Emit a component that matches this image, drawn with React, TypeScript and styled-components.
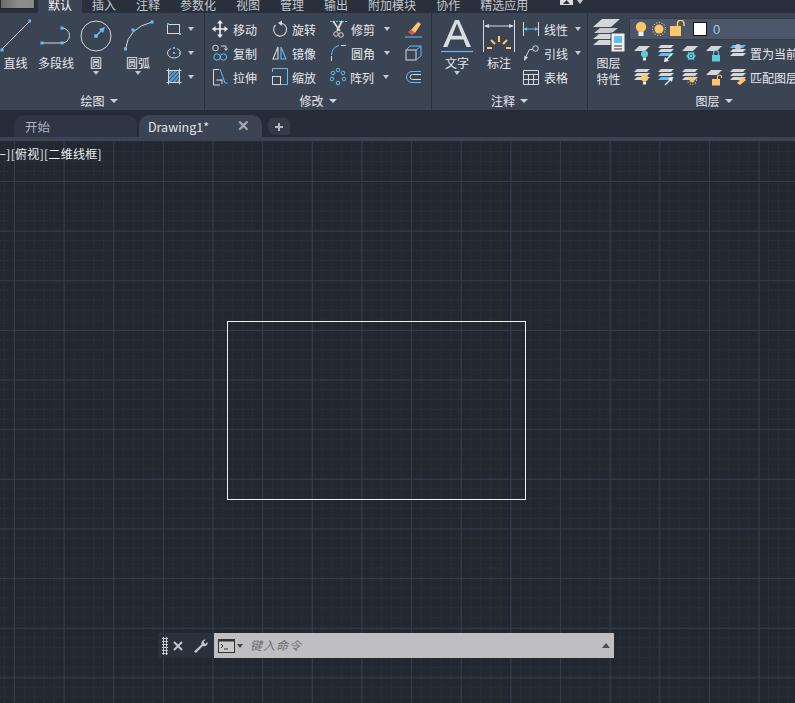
import React from "react";
import styled, { createGlobalStyle } from "styled-components";

const BLUE = "#62bdf5";
const GREY = "#d6d8dc";
const AMBER = "#fbc76a";
const TEAL = "#5ccdd6";

const GlobalStyle = createGlobalStyle`
  html, body {
    margin: 0;
    height: 100%;
    overflow: hidden;
    background: #212830;
  }
  body {
    font-family: "Noto Sans CJK SC", "Liberation Sans", sans-serif;
    font-size: 12px;
    color: #e6e8ec;
  }
  svg {
    display: block;
    flex: none;
  }
`;

const Page = styled.div`
  width: 795px;
  height: 703px;
  display: flex;
  flex-direction: column;
  overflow: hidden;
`;

const MenuBar = styled.div`
  height: 13px;
  flex: none;
  display: flex;
  background: #29303c;
  overflow: hidden;
`;

const QuickAccess = styled.div`
  width: 33px;
  height: 8px;
  margin-right: 3px;
  border: 1px solid #23282f;
  border-top: 0;
  background: linear-gradient(to right, #6a6a6a, #8d8d8d 55%, #8a8a8a);
`;

const MenuTab = styled.div<{ $active?: boolean }>`
  height: 13px;
  padding: 0 10px;
  line-height: 9px;
  color: ${(p) => (p.$active ? "#f2f3f5" : "#c3c7ce")};
  background: ${(p) => (p.$active ? "#3b4453" : "transparent")};
`;

const MenuToggle = styled.div`
  display: flex;
  align-items: flex-start;
  gap: 4px;
  margin-left: 22px;
`;

const Ribbon = styled.div`
  height: 97px;
  flex: none;
  display: flex;
  background: #3b4453;
  overflow: hidden;
`;

const Panel = styled.section<{ $width: number; $offset?: number; $last?: boolean }>`
  width: ${(p) => p.$width}px;
  flex: none;
  margin-left: ${(p) => p.$offset ?? 0}px;
  display: flex;
  flex-direction: column;
  border-right: ${(p) => (p.$last ? "0" : "1px solid #29303c")};
  box-sizing: border-box;
`;

const PanelBody = styled.div<{ $inset?: number }>`
  height: 79px;
  flex: none;
  display: flex;
  padding: 4px 0 0 ${(p) => p.$inset ?? 0}px;
  box-sizing: border-box;
`;

const PanelTitle = styled.div`
  height: 18px;
  display: flex;
  align-items: center;
  justify-content: center;
  gap: 5px;
  line-height: 18px;
`;

const BigTool = styled.div<{ $width: number }>`
  width: ${(p) => p.$width}px;
  flex: none;
  display: flex;
  flex-direction: column;
  align-items: center;
`;

const BigIcon = styled.div`
  height: 38px;
  display: flex;
  align-items: center;
  justify-content: center;
`;

const BigLabel = styled.div`
  line-height: 16px;
  white-space: nowrap;
  text-align: center;
`;

const ToolColumn = styled.div<{ $width?: number; $inset?: number }>`
  width: ${(p) => (p.$width ? `${p.$width}px` : "auto")};
  flex: none;
  padding-left: ${(p) => p.$inset ?? 0}px;
  box-sizing: border-box;
`;

const SmallTool = styled.div<{ $gap?: number }>`
  height: 24px;
  display: flex;
  align-items: center;
  gap: ${(p) => p.$gap ?? 5}px;
  white-space: nowrap;
`;

const SmallCaret = styled.span<{ $gap?: number; $color?: string }>`
  margin-left: ${(p) => p.$gap ?? 1}px;
  width: 0;
  height: 0;
  border: 3px solid transparent;
  border-top: 4px solid ${(p) => p.$color ?? "#c5c8ce"};
  border-bottom: 0;
`;

const TitleCaret = styled.span`
  width: 0;
  height: 0;
  border: 4px solid transparent;
  border-top: 4px solid #cfd2d7;
  border-bottom: 0;
`;

const LayerSide = styled.div`
  flex: 1;
  margin-top: 1px;
`;

const LayerSelect = styled.div`
  height: 22px;
  margin-bottom: 1px;
  padding-left: 4px;
  display: flex;
  align-items: center;
  gap: 4px;
  background: #4b5668;
  border: 1px solid #343c4a;
  border-right: 0;
  color: #9ccbee;
  font-family: "Liberation Sans", sans-serif;
  font-size: 13px;
  box-sizing: border-box;
`;

const Swatch = styled.span`
  width: 12px;
  height: 12px;
  margin: 0 2px 0 3px;
  background: #fff;
  border: 1px solid #111;
`;

const LayerRow = styled.div`
  height: 24px;
  padding-left: 4px;
  display: flex;
  align-items: center;
  gap: 7px;
  white-space: nowrap;
`;

const LayerLabel = styled.span`
  margin-left: -3px;
`;

const FileTabs = styled.div`
  height: 27px;
  flex: none;
  display: flex;
  align-items: flex-end;
  padding-left: 14px;
  gap: 2px;
  background: #252c37;
`;

const FileTab = styled.div<{ $active?: boolean }>`
  width: 123px;
  height: 22px;
  padding: 0 11px 0 ${(p) => (p.$active ? 9 : 11)}px;
  display: flex;
  align-items: center;
  justify-content: space-between;
  box-sizing: border-box;
  border-radius: 10px 10px 0 0;
  font-size: 12.5px;
  color: ${(p) => (p.$active ? "#e3e5e9" : "#aeb4bd")};
  background: ${(p) => (p.$active ? "#3b4453" : "#2e3644")};
`;

const TabClose = styled.span`
  color: #a7abb2;
  font-size: 15px;
  font-family: "Liberation Sans", sans-serif;
  font-weight: 700;
  margin-right: 1px;
`;

const NewTab = styled.div`
  width: 22px;
  height: 17px;
  margin-left: 4px;
  margin-bottom: 2px;
  display: flex;
  align-items: center;
  justify-content: center;
  border-radius: 6px 6px 2px 8px;
  background: #333b49;
`;

const TabRule = styled.div`
  height: 4px;
  flex: none;
  background: #3b4453;
`;

const Canvas = styled.main`
  position: relative;
  flex: 1;
  overflow: hidden;
  background-color: #212830;
  background-image:
    linear-gradient(to right, #363c50 1px, transparent 1px),
    linear-gradient(to bottom, #363c50 1px, transparent 1px),
    conic-gradient(from 270deg at 1px 2px, #2b313e 90deg, transparent 0),
    conic-gradient(from 270deg at 2px 1px, #2b313e 90deg, transparent 0);
  background-size: 49.65px 100%, 100% 49.65px, 9.93px 3.31px, 3.31px 9.93px;
  background-position: 14px 0, 0 40px, 4px 0, 0 0;
`;

const ViewLabel = styled.div`
  position: absolute;
  left: -5px;
  top: 5px;
  line-height: 16px;
  letter-spacing: 0.3px;
  color: #eceef0;
  white-space: nowrap;
`;

const Rectangle = styled.div`
  position: absolute;
  left: 227px;
  top: 180px;
  width: 297px;
  height: 177px;
  border: 1px solid #f2f2f2;
`;

const CommandLine = styled.div`
  position: absolute;
  left: 158px;
  top: 492px;
  width: 456px;
  height: 25px;
  display: flex;
  align-items: center;
  background: #2a313d;
`;

const Gripper = styled.div`
  width: 6px;
  height: 18px;
  margin: 0 4px;
  background-image: radial-gradient(circle, #c4c7cc 1.1px, transparent 1.4px);
  background-size: 3px 3px;
`;

const ToolGap = styled.span`
  width: 9px;
  flex: none;
`;

const CommandInput = styled.div`
  flex: 1;
  height: 25px;
  margin-left: 5px;
  padding: 0 4px;
  display: flex;
  align-items: center;
  background: #bfbfc1;
  color: #6c6c6e;
  font-style: italic;
`;

const Placeholder = styled.span`
  flex: 1;
  margin-left: 7px;
  padding-bottom: 2px;
  letter-spacing: 1px;
`;

const Node = ({ x, y, s = 4 }: { x: number; y: number; s?: number }) => (
  <rect x={x - s / 2} y={y - s / 2} width={s} height={s} fill={BLUE} />
);

const LineIcon = () => (
  <svg width="31" height="38" viewBox="0 0 31 38">
    <path d="M1 33 30 4" stroke={GREY} fill="none" />
    <Node x={2} y={33} s={3} />
    <Node x={30} y={4} s={3} />
  </svg>
);

const PolylineIcon = () => (
  <svg width="50" height="38" viewBox="0 0 50 38">
    <path d="M11 26H31A7.5 7.5 0 0 0 31 11" stroke={GREY} fill="none" />
    <Node x={11} y={26} s={3} />
    <Node x={31} y={26} s={3} />
    <Node x={31} y={11} s={3} />
  </svg>
);

const CircleIcon = () => (
  <svg width="32" height="32" viewBox="0 0 32 32">
    <circle cx="16" cy="16" r="15" stroke={GREY} fill="none" />
    <path d="M16 16 24 8" stroke={BLUE} strokeWidth="1.5" />
    <path d="M25 7 19 9 23 13Z" fill={BLUE} />
    <Node x={16} y={16} s={3.5} />
  </svg>
);

const ArcIcon = () => (
  <svg width="54" height="38" viewBox="0 0 54 38">
    <path d="M14.5 32Q17 11 41 5" stroke={GREY} fill="none" />
    <Node x={14.5} y={32} s={3} />
    <Node x={22} y={13} s={3} />
    <Node x={41} y={5} s={3} />
  </svg>
);

const Glyph = ({ children }: { children: React.ReactNode }) => (
  <svg width="16" height="18" viewBox="0 0 16 18">
    {children}
  </svg>
);

const RectIcon = () => (
  <Glyph>
    <rect x="1.5" y="4.5" width="12" height="9" stroke={GREY} fill="none" />
    <Node x={2} y={4} s={2} />
    <Node x={14} y={14} s={2} />
  </Glyph>
);

const EllipseIcon = () => (
  <Glyph>
    <ellipse cx="8" cy="9" rx="6.5" ry="5" stroke={GREY} fill="none" />
    <rect x="5" y="3" width="6" height="3" fill="#3b4453" />
    <Node x={8} y={9} s={2} />
    <Node x={8} y={4} s={2} />
    <Node x={14} y={9} s={2} />
  </Glyph>
);

const HatchIcon = () => (
  <Glyph>
    <rect x="3" y="3" width="10" height="11" fill={BLUE} opacity="0.7" />
    <path d="M3 8 8 3M3 12 12 3M6 14 13 6M10 14 13 10" stroke="#3b4453" />
    <path d="M0.5 2.5H15.5M0.5 14.5H15.5M2.5 0.5V16.5M13.5 0.5V16.5" stroke={GREY} />
  </Glyph>
);

const MoveIcon = () => (
  <Glyph>
    <path d="M8 2V16M1 9H15" stroke="#f0f0f0" strokeWidth="1.6" />
    <path d="M8 0 11 3.5H5ZM8 18 5 14.5H11ZM0 9 3.5 6V12ZM16 9 12.5 12V6Z" fill="#f0f0f0" />
  </Glyph>
);

const RotateIcon = () => (
  <Glyph>
    <path d="M9.5 3.2A6.5 6.5 0 1 1 3.5 5" stroke={GREY} fill="none" strokeWidth="1.1" />
    <path d="M6 3 10 0.5V6Z" fill={GREY} />
  </Glyph>
);

const TrimIcon = () => (
  <svg width="17" height="18" viewBox="0 0 17 18">
    <path d="M0 1.5H17" stroke={BLUE} strokeDasharray="2 1" />
    <path d="M3 1 10 11M12 1 7 11" stroke={GREY} strokeWidth="1.8" />
    <circle cx="6" cy="14" r="2.3" stroke={GREY} fill="none" />
    <circle cx="11" cy="15" r="2.3" stroke={GREY} fill="none" />
  </svg>
);

const CopyIcon = () => (
  <Glyph>
    <circle cx="3.5" cy="4" r="2.8" stroke={GREY} fill="none" />
    <path d="M9 2H14V6M12.5 4.5 14 6.5 15.5 4.5" stroke={GREY} fill="none" />
    <circle cx="5" cy="13" r="3.2" stroke={BLUE} fill="none" />
    <circle cx="11.5" cy="13" r="3.2" stroke={BLUE} fill="none" />
  </Glyph>
);

const MirrorIcon = () => (
  <Glyph>
    <path d="M6 3V15H1Z" fill="none" stroke={GREY} strokeWidth="1.1" />
    <path d="M9 3V15H14Z" fill="none" stroke={BLUE} strokeWidth="1.1" />
  </Glyph>
);

const FilletIcon = () => (
  <svg width="17" height="18" viewBox="0 0 17 18">
    <path d="M1.5 17V12" stroke={GREY} />
    <path d="M1.5 11Q2 3 9 1.5" stroke={BLUE} fill="none" />
    <path d="M11 1.5H16" stroke={GREY} />
  </svg>
);

const StretchIcon = () => (
  <Glyph>
    <path d="M1.5 17V1.5H7" stroke={GREY} fill="none" />
    <path d="M8 1 13 15H15.5" stroke={BLUE} fill="none" />
    <path d="M1.5 17H8M4.5 12H10V16M8.5 13 10 11.5" stroke={GREY} fill="none" />
  </Glyph>
);

const ScaleIcon = () => (
  <Glyph>
    <path d="M0.5 4V0.5H15.5V16.5H9" stroke={BLUE} fill="none" />
    <rect x="0.5" y="8.5" width="8" height="8" stroke={GREY} fill="none" />
  </Glyph>
);

const ArrayIcon = () => (
  <svg width="16" height="18" viewBox="0 0 16 18">
    {[
      [8, 2],
      [3, 5],
      [13, 5],
      [2, 11],
      [14, 11],
      [8, 15],
    ].map(([cx, cy]) => (
      <circle key={`${cx}-${cy}`} cx={cx} cy={cy} r="1.8" stroke={BLUE} fill="none" />
    ))}
  </svg>
);

const EraseIcon = () => (
  <svg width="17" height="18" viewBox="0 0 17 18">
    <path d="M6 10 13 2 16 4 10 13Z" fill={AMBER} />
    <path d="M3 12 6 9.5 10 13 7 15Z" fill="#e4574b" />
    <path d="M0 17H17" stroke={BLUE} />
  </svg>
);

const BoxIcon = () => (
  <svg width="17" height="18" viewBox="0 0 17 18">
    <rect x="1" y="6" width="10" height="10" stroke={GREY} fill="none" />
    <path d="M1 6 5 2H16V12L11 16M11 6 16 2" stroke={BLUE} fill="none" />
  </svg>
);

const OffsetIcon = () => (
  <svg width="17" height="18" viewBox="0 0 17 18">
    <path d="M16 3.5H7A5.5 5.5 0 0 0 7 14.5H16" stroke={BLUE} fill="none" />
    <path d="M16 6.5H7.5A2.5 2.5 0 0 0 7.5 11.5H16" stroke={GREY} fill="none" />
  </svg>
);

const TextIcon = () => (
  <svg width="34" height="34" viewBox="0 0 34 34">
    <path d="M3 28 15 1H19L31 28H26.5L23.5 20.5H10.5L7.5 28ZM12 16.8H22L17 4.5Z" fill="#d9dbde" />
    <path d="M1 32.5H33" stroke={BLUE} strokeWidth="1.2" />
  </svg>
);

const DimensionIcon = () => (
  <svg width="34" height="34" viewBox="0 0 34 34">
    <path d="M1.5 1V33M32.5 1V33M3 7H31" stroke={GREY} fill="none" />
    <path d="M2 7 7 5V9ZM32 7 27 5V9Z" fill={GREY} />
    <path d="M17 17V23M9 21 13 25M25 21 21 25M5 29H10M24 29H29" stroke={AMBER} strokeWidth="2" />
  </svg>
);

const LinearIcon = () => (
  <Glyph>
    <path d="M0.5 2V16M15.5 2V16" stroke={GREY} />
    <path d="M1 9H15" stroke={BLUE} />
    <path d="M1 9 4 7V11ZM15 9 12 7V11Z" fill={BLUE} />
  </Glyph>
);

const LeaderIcon = () => (
  <Glyph>
    <circle cx="12.5" cy="4.5" r="2.8" stroke={GREY} fill="none" />
    <path d="M10 5.5H6.5L2 14" stroke={GREY} fill="none" />
    <path d="M1 17 1.5 11.5 5 13.5Z" fill={GREY} />
  </Glyph>
);

const TableIcon = () => (
  <Glyph>
    <path
      d="M0.5 2.5H15.5V16.5H0.5ZM0.5 6.5H15.5M0.5 11.5H15.5M5.5 6.5V16.5M10.5 6.5V16.5"
      stroke={GREY}
      fill="none"
    />
  </Glyph>
);

const Plate = ({ y = 0, h = 5, color = "#d4d6d9" }: { y?: number; h?: number; color?: string }) => (
  <path d={`M1 ${y + h} ${1 + h} ${y}H17L${17 - h} ${y + h}Z`} fill={color} />
);

// three thin plates, any of them can be tinted
const Stack = ({ colors = ["#d4d6d9", "#d4d6d9", "#d4d6d9"] }: { colors?: string[] }) => (
  <>
    <Plate y={1} h={3} color={colors[0]} />
    <Plate y={5} h={3} color={colors[1]} />
    <Plate y={9} h={3} color={colors[2]} />
  </>
);

const LayerGlyph = ({ children }: { children: React.ReactNode }) => (
  <svg width="17" height="18" viewBox="0 0 17 18">
    {children}
  </svg>
);

const Bulb = ({ x, y, r = 3.5, color }: { x: number; y: number; r?: number; color: string }) => (
  <>
    <circle cx={x} cy={y} r={r} fill={color} />
    <rect x={x - 1.5} y={y + r} width="3" height="3" fill="#f0f0f0" />
  </>
);

const Sun = ({ x, y, r = 2.5, color }: { x: number; y: number; r?: number; color: string }) => (
  <>
    <circle cx={x} cy={y} r={r} fill={color} />
    <circle
      cx={x}
      cy={y}
      r={r + 2}
      fill="none"
      stroke={color}
      strokeWidth="1.2"
      strokeDasharray="1 1.7"
    />
  </>
);

const Flake = ({ x, y }: { x: number; y: number }) => (
  <>
    <circle cx={x} cy={y} r="3" fill="none" stroke={TEAL} strokeWidth="1.6" />
    <path
      d={`M${x - 5} ${y}H${x + 5}M${x - 3} ${y - 4}L${x + 3} ${y + 4}M${x + 3} ${y - 4}L${x - 3} ${y + 4}`}
      stroke={TEAL}
    />
  </>
);

const Lock = ({ x, y, color, open }: { x: number; y: number; color: string; open?: boolean }) => (
  <>
    <rect x={x} y={y + 4} width="8" height="6.5" fill={color} />
    <path
      d={
        open
          ? `M${x + 5.5} ${y + 4}V${y + 2}A2 2 0 0 1 ${x + 9.5} ${y + 2}V${y + 3}`
          : `M${x + 1.5} ${y + 4}V${y + 2}A2.5 2.5 0 0 1 ${x + 6.5} ${y + 2}V${y + 4}`
      }
      stroke={color}
      strokeWidth="1.1"
      fill="none"
    />
  </>
);

const Arrow = ({ out }: { out?: boolean }) => (
  <>
    <path d="M8 17 15 10" stroke="#f0f0f0" strokeWidth="1.3" />
    <path d={out ? "M16 9 11 10 15 14Z" : "M7 18 12 17 8 13Z"} fill="#f0f0f0" />
  </>
);

const PropertiesIcon = () => (
  <svg width="34" height="36" viewBox="0 0 34 36">
    <path d="M1 9 10 1H28L19 9Z" fill="#d4d6d9" />
    <path d="M2 15 8 10H26L20 15Z" fill="#c7c9cc" />
    <path d="M1 21 7 16H24L18 21Z" fill="#d4d6d9" />
    <path d="M1 27 7 22H20V27Z" fill="#d4d6d9" />
    <rect x="19" y="15" width="14" height="19" fill="#f0f0f0" stroke="#3b4453" />
    <rect x="22" y="18" width="8" height="7" fill={BLUE} />
    <path d="M22 28H30M22 31H30" stroke="#333" />
  </svg>
);

const BulbOn = () => (
  <svg width="14" height="18" viewBox="0 0 14 18">
    <circle cx="7" cy="7" r="5.2" fill={AMBER} />
    <rect x="4.5" y="12" width="5" height="4" fill="#f0f0f0" />
  </svg>
);

const SunOn = () => (
  <svg width="14" height="18" viewBox="0 0 14 18">
    <Sun x={7} y={9} r={4.5} color={AMBER} />
  </svg>
);

const LockOpen = () => (
  <svg width="16" height="18" viewBox="0 0 16 18">
    <rect x="0" y="6" width="11" height="10" fill={AMBER} />
    <path d="M7.5 6V3.5A3 3 0 0 1 14 3.5V6" stroke={AMBER} strokeWidth="1.5" fill="none" />
  </svg>
);

const TerminalIcon = () => (
  <svg width="17" height="14" viewBox="0 0 17 14">
    <rect x="0.5" y="0.5" width="16" height="13" fill="#c8c8c8" stroke="#333" />
    <rect x="0.5" y="0.5" width="16" height="2" fill="#333" />
    <path d="M3 5 5 7 3 9M6 10H10" stroke="#333" fill="none" />
  </svg>
);

const CloseIcon = () => (
  <svg width="12" height="12" viewBox="0 0 12 12">
    <path d="M2 2 10 10M10 2 2 10" stroke="#c3c6cb" strokeWidth="2" />
  </svg>
);

const WrenchIcon = () => (
  <svg width="16" height="16" viewBox="0 0 16 16">
    <path
      d="M1 13.5 8.5 6.5C8 4 9.5 1.5 12.5 1.5L10.5 4 12 6 14.8 4C15 7 12.5 9 9.8 8L3 15Z"
      fill="#c3c6cb"
    />
  </svg>
);

const menuTabs = ["插入", "注释", "参数化", "视图", "管理", "输出", "附加模块", "协作", "精选应用"];

export default function App() {
  return (
    <Page>
      <GlobalStyle />
      <MenuBar>
        <QuickAccess />
        <MenuTab $active>默认</MenuTab>
        {menuTabs.map((tab) => (
          <MenuTab key={tab}>{tab}</MenuTab>
        ))}
        <MenuToggle>
          <svg width="13" height="5" viewBox="0 0 13 5">
            <rect width="13" height="5" fill="#d8dade" />
            <path d="M6.5 0 10 4H3Z" fill="#333" />
          </svg>
          <SmallCaret $gap={0} />
        </MenuToggle>
      </MenuBar>

      <Ribbon>
        <Panel $width={211} $offset={-6}>
          <PanelBody $inset={6}>
            <BigTool $width={31}>
              <BigIcon><LineIcon /></BigIcon>
              <BigLabel>直线</BigLabel>
            </BigTool>
            <BigTool $width={50}>
              <BigIcon><PolylineIcon /></BigIcon>
              <BigLabel>多段线</BigLabel>
            </BigTool>
            <BigTool $width={30}>
              <BigIcon><CircleIcon /></BigIcon>
              <BigLabel>圆</BigLabel>
              <SmallCaret $gap={0} />
            </BigTool>
            <BigTool $width={54}>
              <BigIcon><ArcIcon /></BigIcon>
              <BigLabel>圆弧</BigLabel>
              <SmallCaret $gap={0} />
            </BigTool>
            <ToolColumn $inset={1}>
              <SmallTool><RectIcon /><SmallCaret /></SmallTool>
              <SmallTool><EllipseIcon /><SmallCaret /></SmallTool>
              <SmallTool><HatchIcon /><SmallCaret /></SmallTool>
            </ToolColumn>
          </PanelBody>
          <PanelTitle>绘图<TitleCaret /></PanelTitle>
        </Panel>

        <Panel $width={227}>
          <PanelBody $inset={7}>
            <ToolColumn $width={60}>
              <SmallTool><MoveIcon />移动</SmallTool>
              <SmallTool><CopyIcon />复制</SmallTool>
              <SmallTool><StretchIcon />拉伸</SmallTool>
            </ToolColumn>
            <ToolColumn $width={58}>
              <SmallTool $gap={4}><RotateIcon />旋转</SmallTool>
              <SmallTool $gap={4}><MirrorIcon />镜像</SmallTool>
              <SmallTool $gap={4}><ScaleIcon />缩放</SmallTool>
            </ToolColumn>
            <ToolColumn $width={75}>
              <SmallTool $gap={4}><TrimIcon />修剪<SmallCaret $gap={5} /></SmallTool>
              <SmallTool $gap={4}><FilletIcon />圆角<SmallCaret $gap={5} /></SmallTool>
              <SmallTool $gap={4}><ArrayIcon />阵列<SmallCaret $gap={5} /></SmallTool>
            </ToolColumn>
            <ToolColumn>
              <SmallTool><EraseIcon /></SmallTool>
              <SmallTool><BoxIcon /></SmallTool>
              <SmallTool><OffsetIcon /></SmallTool>
            </ToolColumn>
          </PanelBody>
          <PanelTitle>修改<TitleCaret /></PanelTitle>
        </Panel>

        <Panel $width={156}>
          <PanelBody>
            <BigTool $width={50}>
              <BigIcon><TextIcon /></BigIcon>
              <BigLabel>文字</BigLabel>
              <SmallCaret $gap={0} />
            </BigTool>
            <BigTool $width={34}>
              <BigIcon><DimensionIcon /></BigIcon>
              <BigLabel>标注</BigLabel>
            </BigTool>
            <ToolColumn $inset={7}>
              <SmallTool><LinearIcon />线性<SmallCaret $gap={2} /></SmallTool>
              <SmallTool><LeaderIcon />引线<SmallCaret $gap={2} /></SmallTool>
              <SmallTool><TableIcon />表格</SmallTool>
            </ToolColumn>
          </PanelBody>
          <PanelTitle>注释<TitleCaret /></PanelTitle>
        </Panel>

        <Panel $width={252} $last>
          <PanelBody>
            <BigTool $width={41}>
              <BigIcon><PropertiesIcon /></BigIcon>
              <BigLabel>图层<br />特性</BigLabel>
            </BigTool>
            <LayerSide>
              <LayerSelect>
                <BulbOn />
                <SunOn />
                <LockOpen />
                <Swatch />
                0
              </LayerSelect>
              <LayerRow>
                <LayerGlyph><Plate y={2} /><Bulb x={11.5} y={10} r={3.5} color={TEAL} /></LayerGlyph>
                <LayerGlyph><Stack colors={[GREY, GREY, BLUE]} /><Arrow /></LayerGlyph>
                <LayerGlyph><Plate y={2} /><Flake x={10} y={12} /></LayerGlyph>
                <LayerGlyph><Plate y={2} /><Lock x={7} y={7} color={TEAL} /></LayerGlyph>
                <LayerGlyph>
                  <Stack colors={[BLUE, GREY, GREY]} />
                  <circle cx="9" cy="3" r="3" fill="#c8cacd" />
                </LayerGlyph>
                <LayerLabel>置为当前</LayerLabel>
              </LayerRow>
              <LayerRow>
                <LayerGlyph><Stack /><Bulb x={11.5} y={10} r={3.5} color={AMBER} /></LayerGlyph>
                <LayerGlyph><Stack colors={[GREY, GREY, BLUE]} /><Arrow out /></LayerGlyph>
                <LayerGlyph><Stack /><Sun x={11} y={12} r={2.5} color={AMBER} /></LayerGlyph>
                <LayerGlyph><Plate y={2} /><Lock x={7} y={7} color={AMBER} open /></LayerGlyph>
                <LayerGlyph><Stack /><path d="M8 15 14 9 17 12 11 17Z" fill={AMBER} /></LayerGlyph>
                <LayerLabel>匹配图层</LayerLabel>
              </LayerRow>
            </LayerSide>
          </PanelBody>
          <PanelTitle>图层<TitleCaret /></PanelTitle>
        </Panel>
      </Ribbon>

      <FileTabs>
        <FileTab>开始</FileTab>
        <FileTab $active>
          Drawing1*
          <TabClose>✕</TabClose>
        </FileTab>
        <NewTab>
          <svg width="10" height="10" viewBox="0 0 10 10">
            <path d="M5 1V9M1 5H9" stroke="#b4b8be" strokeWidth="2" />
          </svg>
        </NewTab>
      </FileTabs>
      <TabRule />

      <Canvas>
        <ViewLabel>[−][俯视][二维线框]</ViewLabel>
        <Rectangle />
        <CommandLine>
          <Gripper />
          <CloseIcon />
          <ToolGap />
          <WrenchIcon />
          <CommandInput>
            <TerminalIcon />
            <SmallCaret $gap={2} $color="#444" />
            <Placeholder>键入命令</Placeholder>
            <svg width="8" height="5" viewBox="0 0 8 5">
              <path d="M4 0 8 5H0Z" fill="#4e4e50" />
            </svg>
          </CommandInput>
        </CommandLine>
      </Canvas>
    </Page>
  );
}
